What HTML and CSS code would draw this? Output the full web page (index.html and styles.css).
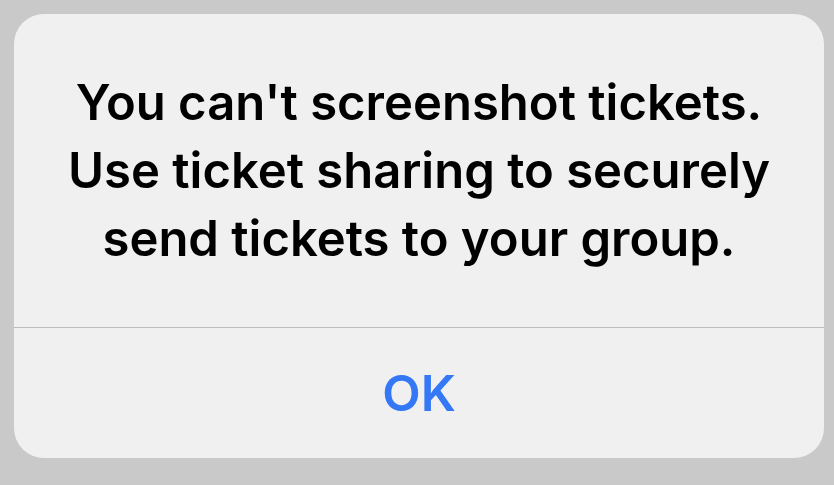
FILE: index.html
```html
<!DOCTYPE html>
<html lang="en">
<head>
    <meta charset="UTF-8">
    <meta name="viewport" content="width=device-width, initial-scale=1.0">
    <title>Alert</title>
    <link rel="stylesheet" href="styles.css">
</head>
<body>
    <div class="alert">
        <div class="alert-message">
            <p>You can't screenshot tickets.<br>Use ticket sharing to securely<br>send tickets to your group.</p>
        </div>
        <div class="alert-actions">
            <button class="alert-btn">OK</button>
        </div>
    </div>
</body>
</html>
```

FILE: styles.css
```css
html, body {
    margin: 0;
    padding: 0;
    height: 100%;
}
body {
    background-color: #c9c9c9;
    font-family: Inter, "Noto Sans", "Liberation Sans", sans-serif;
    padding: 14px 10px 27px 14px;
    box-sizing: border-box;
}
.alert {
    height: 100%;
    background-color: #f0f0f0;
    border-radius: 30px;
    display: flex;
    flex-direction: column;
    overflow: hidden;
}
.alert-message {
    height: 313px;
    display: flex;
    align-items: center;
    justify-content: center;
    border-bottom: 1px solid #bdbdbd;
}
.alert-message p {
    margin: 0;
    text-align: center;
    font-size: 49px;
    line-height: 68px;
    font-weight: 600;
    color: #000;
}
.alert-actions {
    flex: 1;
    display: flex;
    align-items: center;
    justify-content: center;
}
.alert-btn {
    border: none;
    background: none;
    padding: 0;
    font-family: inherit;
    font-size: 50px;
    font-weight: 600;
    color: #3478f6;
}
```
